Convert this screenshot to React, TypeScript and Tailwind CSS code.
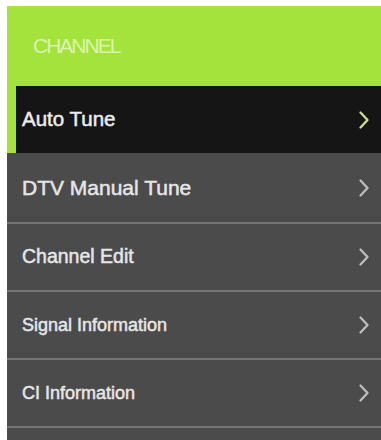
import React from "react";

const Chevron = ({ color }: { color: string }) => (
  <svg width="12" height="20" viewBox="0 0 12 20" fill="none">
    <polyline points="2.5,2.5 9.5,10 2.5,17.5" stroke={color} strokeWidth="2.3" strokeLinecap="round" strokeLinejoin="round" />
  </svg>
);

const rows = [
  { label: "DTV Manual Tune", size: "text-[21px]", h: "h-[69px]" },
  { label: "Channel Edit", size: "text-[19.5px]", h: "h-[66px]" },
  { label: "Signal Information", size: "text-[18px]", h: "h-[66px]" },
  { label: "CI Information", size: "text-[18px]", h: "h-[66px]" },
];

export default function App() {
  return (
    <div
      className="w-[381px] h-[440px] bg-white pl-[7px] pt-[6px] overflow-hidden"
      style={{ fontFamily: '"Liberation Sans", Arial, sans-serif' }}
    >
      <div className="bg-[#a3e33b] h-[80px] flex items-center pl-[26px]">
        <span className="text-[21px] tracking-[-2px] text-[#dcf4b0]">CHANNEL</span>
      </div>
      <div className="bg-[#a3e33b] pl-[9px]">
        <div className="bg-[#151515] h-[67px] flex items-center justify-between pl-[6px] pr-[11px]">
          <span className="text-[20.5px] text-[#ececec] [-webkit-text-stroke:0.5px_#ececec]">Auto Tune</span>
          <Chevron color="#c6e48a" />
        </div>
      </div>
      <div className="bg-[#4b4b4b]">
        {rows.map((r) => (
          <div
            key={r.label}
            className={`${r.h} flex items-center justify-between pl-[15px] pr-[11px] border-b-2 border-[#747474] box-content`}
          >
            <span className={`${r.size} text-[#e6e6e6] [-webkit-text-stroke:0.5px_#e6e6e6]`}>{r.label}</span>
            <Chevron color="#bdbdbd" />
          </div>
        ))}
        <div className="h-[20px]" />
      </div>
    </div>
  );
}
